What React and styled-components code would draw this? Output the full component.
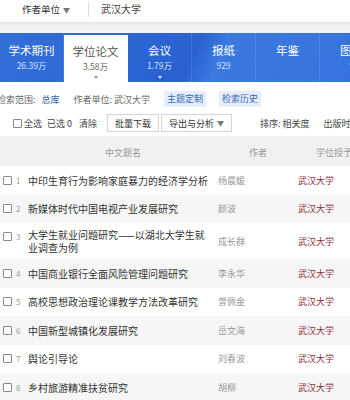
import React from 'react';
import styled, { createGlobalStyle } from 'styled-components';

const GlobalStyle = createGlobalStyle`
  html, body { margin: 0; padding: 0; background: #fff; }
  body { font-family: "Noto Sans CJK SC", "Noto Sans", sans-serif; }
`;

const Page = styled.div`
  width: 350px;
  height: 400px;
  overflow: hidden;
  background: #fff;
`;

const TopBar = styled.div`
  height: 22px;
  display: flex;
  align-items: flex-start;
  padding: 2px 0 0 22px;
  box-sizing: border-box;
  color: #333;
`;

const FieldSelect = styled.span`
  font-size: 9.5px;
  line-height: 14px;
  width: 66px;
  border-right: 1px solid #ddd;
  margin-right: 12px;
`;

const FieldValue = styled.span`
  font-size: 10px;
  line-height: 14px;
  color: #444;
`;

const Caret = styled.span`
  font-size: 7px;
  color: #777;
  margin-left: 3px;
`;

const Gap = styled.div`
  height: 11px;
  background: linear-gradient(#e4e4e4, #f1f2f4 30%, #f3f4f6);
`;

const Tabs = styled.div`
  height: 49px;
  display: flex;
  background: linear-gradient(112deg, #336fd9 0%, #2a64d2 45%, #2b62cf 55%, #3b79e0 62%, #3673dc 100%);
`;

const Tab = styled.div`
  flex: 0 0 64px;
  display: flex;
  flex-direction: column;
  align-items: center;
  justify-content: center;
  position: relative;
  background: ${p => (p.$active ? '#fff' : 'transparent')};
  border-right: 1px solid ${p => (p.$active ? 'transparent' : 'rgba(255,255,255,0.12)')};
  box-sizing: border-box;
  margin-top: ${p => (p.$active ? '2px' : '0')};
`;

const TabLabel = styled.span`
  font-size: 11.5px;
  line-height: 15px;
  color: ${p => (p.$active ? '#555' : '#fff')};
`;

const TabCount = styled.span`
  font-size: 8.5px;
  line-height: 13px;
  margin-top: 1px;
  color: ${p => (p.$active ? '#666' : '#cfe0ff')};
`;

const TabArrow = styled.span`
  position: absolute;
  bottom: 3px;
  left: 50%;
  margin-left: -2px;
  width: 0;
  height: 0;
  border-left: 2.5px solid transparent;
  border-right: 2.5px solid transparent;
  border-top: 3px solid ${p => (p.$active ? '#999' : '#dfe9ff')};
`;

const FilterRow = styled.div`
  height: 22px;
  margin: 6px 0 0 -3px;
  display: flex;
  align-items: center;
  font-size: 9px;
  color: #666;
  white-space: nowrap;
`;

const FilterLink = styled.span`
  color: #2b5fb0;
  margin: 0 14px 0 6px;
`;

const FilterText = styled.span`
  margin-right: 14px;
`;

const Tag = styled.span`
  background: #e5eefa;
  color: #3467b8;
  padding: 2px 3px;
  margin-right: 13px;
  line-height: 12px;
`;

const Toolbar = styled.div`
  height: 26px;
  display: flex;
  align-items: center;
  padding-left: 13px;
  font-size: 9px;
  color: #444;
  white-space: nowrap;
  border-bottom: 3px solid #f2f2f2;
`;

const Check = styled.span`
  width: 7px;
  height: 7px;
  border: 1px solid #888;
  border-radius: 1px;
  background: #fff;
  flex: 0 0 auto;
`;

const ToolText = styled.span`
  margin-left: ${p => p.$ml || 0}px;
  color: ${p => p.$color || '#444'};
`;

const ToolButton = styled.span`
  height: 18px;
  box-sizing: border-box;
  border: 1px solid #d4d4d4;
  display: flex;
  align-items: center;
  padding: 0 7px;
  margin-left: ${p => p.$ml || 0}px;
  background: #fff;
  color: #333;
`;

const SortGroup = styled.span`
  margin-left: 28px;
  color: #444;
  display: flex;
  gap: 14px;
`;

const Row = styled.div`
  display: grid;
  grid-template-columns: 28px 190px 80px 80px;
  align-items: center;
  background: ${p => (p.$shade ? '#f6f6f6' : '#fff')};
  min-height: 28.5px;
  padding: ${p => (p.$tall ? '5px 0' : '0')};
  box-sizing: border-box;
`;

const HeadRow = styled(Row)`
  background: #f1f1f1;
  min-height: 27px;
  font-size: 9px;
  color: #999;
`;

const HeadCell = styled.span`
  text-align: center;
  padding-left: ${p => p.$pl || 0}px;
`;

const IndexCell = styled.span`
  display: flex;
  align-items: center;
  padding-left: 3px;
  gap: 4px;
  font-size: 8px;
  color: #999;
  align-self: ${p => (p.$top ? 'start' : 'center')};
  margin-top: ${p => (p.$top ? '3px' : '0')};
`;

const TitleCell = styled.span`
  font-size: 10px;
  line-height: 13px;
  color: #333;
  padding-right: 4px;
`;

const AuthorCell = styled.span`
  font-size: 9px;
  color: #999;
`;

const UnitCell = styled.span`
  font-size: 9px;
  color: #8e2c40;
`;

const tabs = [
  { label: '学术期刊', count: '26.39万' },
  { label: '学位论文', count: '3.58万', active: true, arrow: true },
  { label: '会议', count: '1.79万', arrow: true },
  { label: '报纸', count: '929' },
  { label: '年鉴', count: '' },
  { label: '图书', count: '9' },
];

const rows = [
  ['中印生育行为影响家庭暴力的经济学分析', '杨晨媛'],
  ['新媒体时代中国电视产业发展研究', '颜波'],
  ['大学生就业问题研究——以湖北大学生就业调查为例', '成长群'],
  ['中国商业银行全面风险管理问题研究', '李永华'],
  ['高校思想政治理论课教学方法改革研究', '曾佩金'],
  ['中国新型城镇化发展研究', '岳文海'],
  ['舆论引导论', '刘春波'],
  ['乡村旅游精准扶贫研究', '胡柳'],
];

export default function App() {
  return (
    <Page>
      <GlobalStyle />
      <TopBar>
        <FieldSelect>作者单位<Caret>▼</Caret></FieldSelect>
        <FieldValue>武汉大学</FieldValue>
      </TopBar>
      <Gap />
      <Tabs>
        {tabs.map(t => (
          <Tab key={t.label} $active={t.active}>
            <TabLabel $active={t.active}>{t.label}</TabLabel>
            <TabCount $active={t.active}>{t.count || '\u00a0'}</TabCount>
            {t.arrow && <TabArrow $active={t.active} />}
          </Tab>
        ))}
      </Tabs>
      <FilterRow>
        检索范围:<FilterLink>总库</FilterLink>
        <FilterText>作者单位: 武汉大学</FilterText>
        <Tag>主题定制</Tag>
        <Tag>检索历史</Tag>
      </FilterRow>
      <Toolbar>
        <Check />
        <ToolText $ml={2}>全选</ToolText>
        <ToolText $ml={5}>已选 0</ToolText>
        <ToolText $ml={7}>清除</ToolText>
        <ToolButton $ml={10}>批量下载</ToolButton>
        <ToolButton $ml={2}>导出与分析<Caret>▼</Caret></ToolButton>
        <SortGroup>
          <span>排序: 相关度</span>
          <span>出版时间</span>
        </SortGroup>
      </Toolbar>
      <HeadRow>
        <span />
        <HeadCell>中文题名</HeadCell>
        <HeadCell>作者</HeadCell>
        <HeadCell $pl={10}>学位授予单位</HeadCell>
      </HeadRow>
      {rows.map(([title, author], i) => (
        <Row key={title} $shade={i % 2 === 1} $tall={title.length > 20}>
          <IndexCell $top={title.length > 20}>
            <Check />
            {i + 1}
          </IndexCell>
          <TitleCell>{title}</TitleCell>
          <AuthorCell>{author}</AuthorCell>
          <UnitCell>武汉大学</UnitCell>
        </Row>
      ))}
    </Page>
  );
}
